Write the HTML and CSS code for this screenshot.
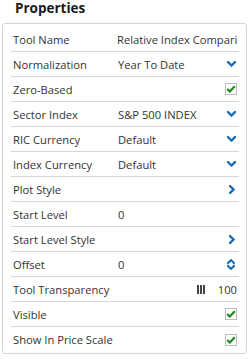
FILE: index.html
```html
<!DOCTYPE html>
<html>

<head>
  <meta charset="UTF-8">
  <title>Properties</title>
  <link rel="stylesheet" href="styles.css">
</head>

<body>

  <h1 class="title">Properties</h1>

  <div class="panel">
    <div class="row">
      <span class="label">Tool Name</span>
      <span class="value value-input">Relative Index Compari</span>
    </div>
    <div class="row">
      <span class="label">Normalization</span>
      <span class="value">Year To Date</span>
      <svg class="icon" width="9" height="6" viewBox="0 0 9 6"><polyline points="1,1 4.5,4.5 8,1" /></svg>
    </div>
    <div class="row">
      <span class="label">Zero-Based</span>
      <span class="check"><svg width="10" height="8" viewBox="0 0 10 8"><polyline points="1.2,4 3.8,6.5 8.8,1.2" /></svg></span>
    </div>
    <div class="row">
      <span class="label">Sector Index</span>
      <span class="value">S&amp;P 500 INDEX</span>
      <svg class="icon" width="9" height="6" viewBox="0 0 9 6"><polyline points="1,1 4.5,4.5 8,1" /></svg>
    </div>
    <div class="row">
      <span class="label">RIC Currency</span>
      <span class="value">Default</span>
      <svg class="icon" width="9" height="6" viewBox="0 0 9 6"><polyline points="1,1 4.5,4.5 8,1" /></svg>
    </div>
    <div class="row">
      <span class="label">Index Currency</span>
      <span class="value">Default</span>
      <svg class="icon" width="9" height="6" viewBox="0 0 9 6"><polyline points="1,1 4.5,4.5 8,1" /></svg>
    </div>
    <div class="row">
      <span class="label">Plot Style</span>
      <span class="value"></span>
      <svg class="icon icon-right" width="6" height="9" viewBox="0 0 6 9"><polyline points="1,1 4.5,4.5 1,8" /></svg>
    </div>
    <div class="row">
      <span class="label">Start Level</span>
      <span class="value">0</span>
    </div>
    <div class="row">
      <span class="label">Start Level Style</span>
      <span class="value"></span>
      <svg class="icon icon-right" width="6" height="9" viewBox="0 0 6 9"><polyline points="1,1 4.5,4.5 1,8" /></svg>
    </div>
    <div class="row">
      <span class="label">Offset</span>
      <span class="value">0</span>
      <svg class="icon icon-spin" width="8" height="11" viewBox="0 0 8 11"><polyline points="1,4 4,1.2 7,4" /><polyline points="1,7 4,9.8 7,7" /></svg>
    </div>
    <div class="row">
      <span class="label">Tool Transparency</span>
      <span class="bars"><i></i><i></i><i></i></span>
      <span class="amount">100</span>
    </div>
    <div class="row">
      <span class="label">Visible</span>
      <span class="check"><svg width="10" height="8" viewBox="0 0 10 8"><polyline points="1.2,4 3.8,6.5 8.8,1.2" /></svg></span>
    </div>
    <div class="row">
      <span class="label">Show In Price Scale</span>
      <span class="check"><svg width="10" height="8" viewBox="0 0 10 8"><polyline points="1.2,4 3.8,6.5 8.8,1.2" /></svg></span>
    </div>
  </div>

</body>

</html>
```

FILE: styles.css
```css
* {
  box-sizing: border-box;
}

body {
  margin: 0;
  padding: 0;
  font-family: "Open Sans", "Liberation Sans", sans-serif;
  font-size: 11.2px;
  color: #333;
  background-color: white;
}

.title {
  margin: 0;
  padding: 0 0 0 15px;
  height: 23px;
  font-size: 13.5px;
  font-weight: bold;
  line-height: 17px;
  color: #1a1a1a;
}

.panel {
  margin-left: 2px;
  width: 245px;
  border: 1px solid #d4d4d4;
  border-radius: 3px;
  padding: 3px 7px 1px 8px;
}

.row {
  display: flex;
  align-items: center;
  height: 25px;
  border-bottom: 1px solid #d6d6d6;
  padding: 0 2px 0 2px;
}

.row:last-child {
  border-bottom: none;
}

.label {
  width: 104px;
  flex-shrink: 0;
  white-space: nowrap;
}

.value {
  flex: 1;
  white-space: nowrap;
  overflow: hidden;
  padding-left: 1px;
}

.value-input {
  margin-left: -1px;
}

.icon {
  flex-shrink: 0;
  fill: none;
  stroke: #1b6fb8;
  stroke-width: 2.4;
  stroke-linecap: square;
  margin-right: 1px;
}

.icon-right {
  margin-right: 2px;
}

.icon-spin {
  stroke-width: 2.2;
  margin-right: 2px;
}

.check {
  margin-left: auto;
  width: 12px;
  height: 12px;
  border: 1px solid #bbb;
  display: flex;
  align-items: center;
  justify-content: center;
}

.check svg {
  fill: none;
  stroke: #1e8a1e;
  stroke-width: 2.2;
}

.bars {
  margin-left: auto;
  display: flex;
  gap: 1px;
  height: 9px;
  margin-right: 13px;
}

.bars i {
  display: block;
  width: 2px;
  height: 9px;
  background-color: #444;
}

.amount {
  white-space: nowrap;
}
```
